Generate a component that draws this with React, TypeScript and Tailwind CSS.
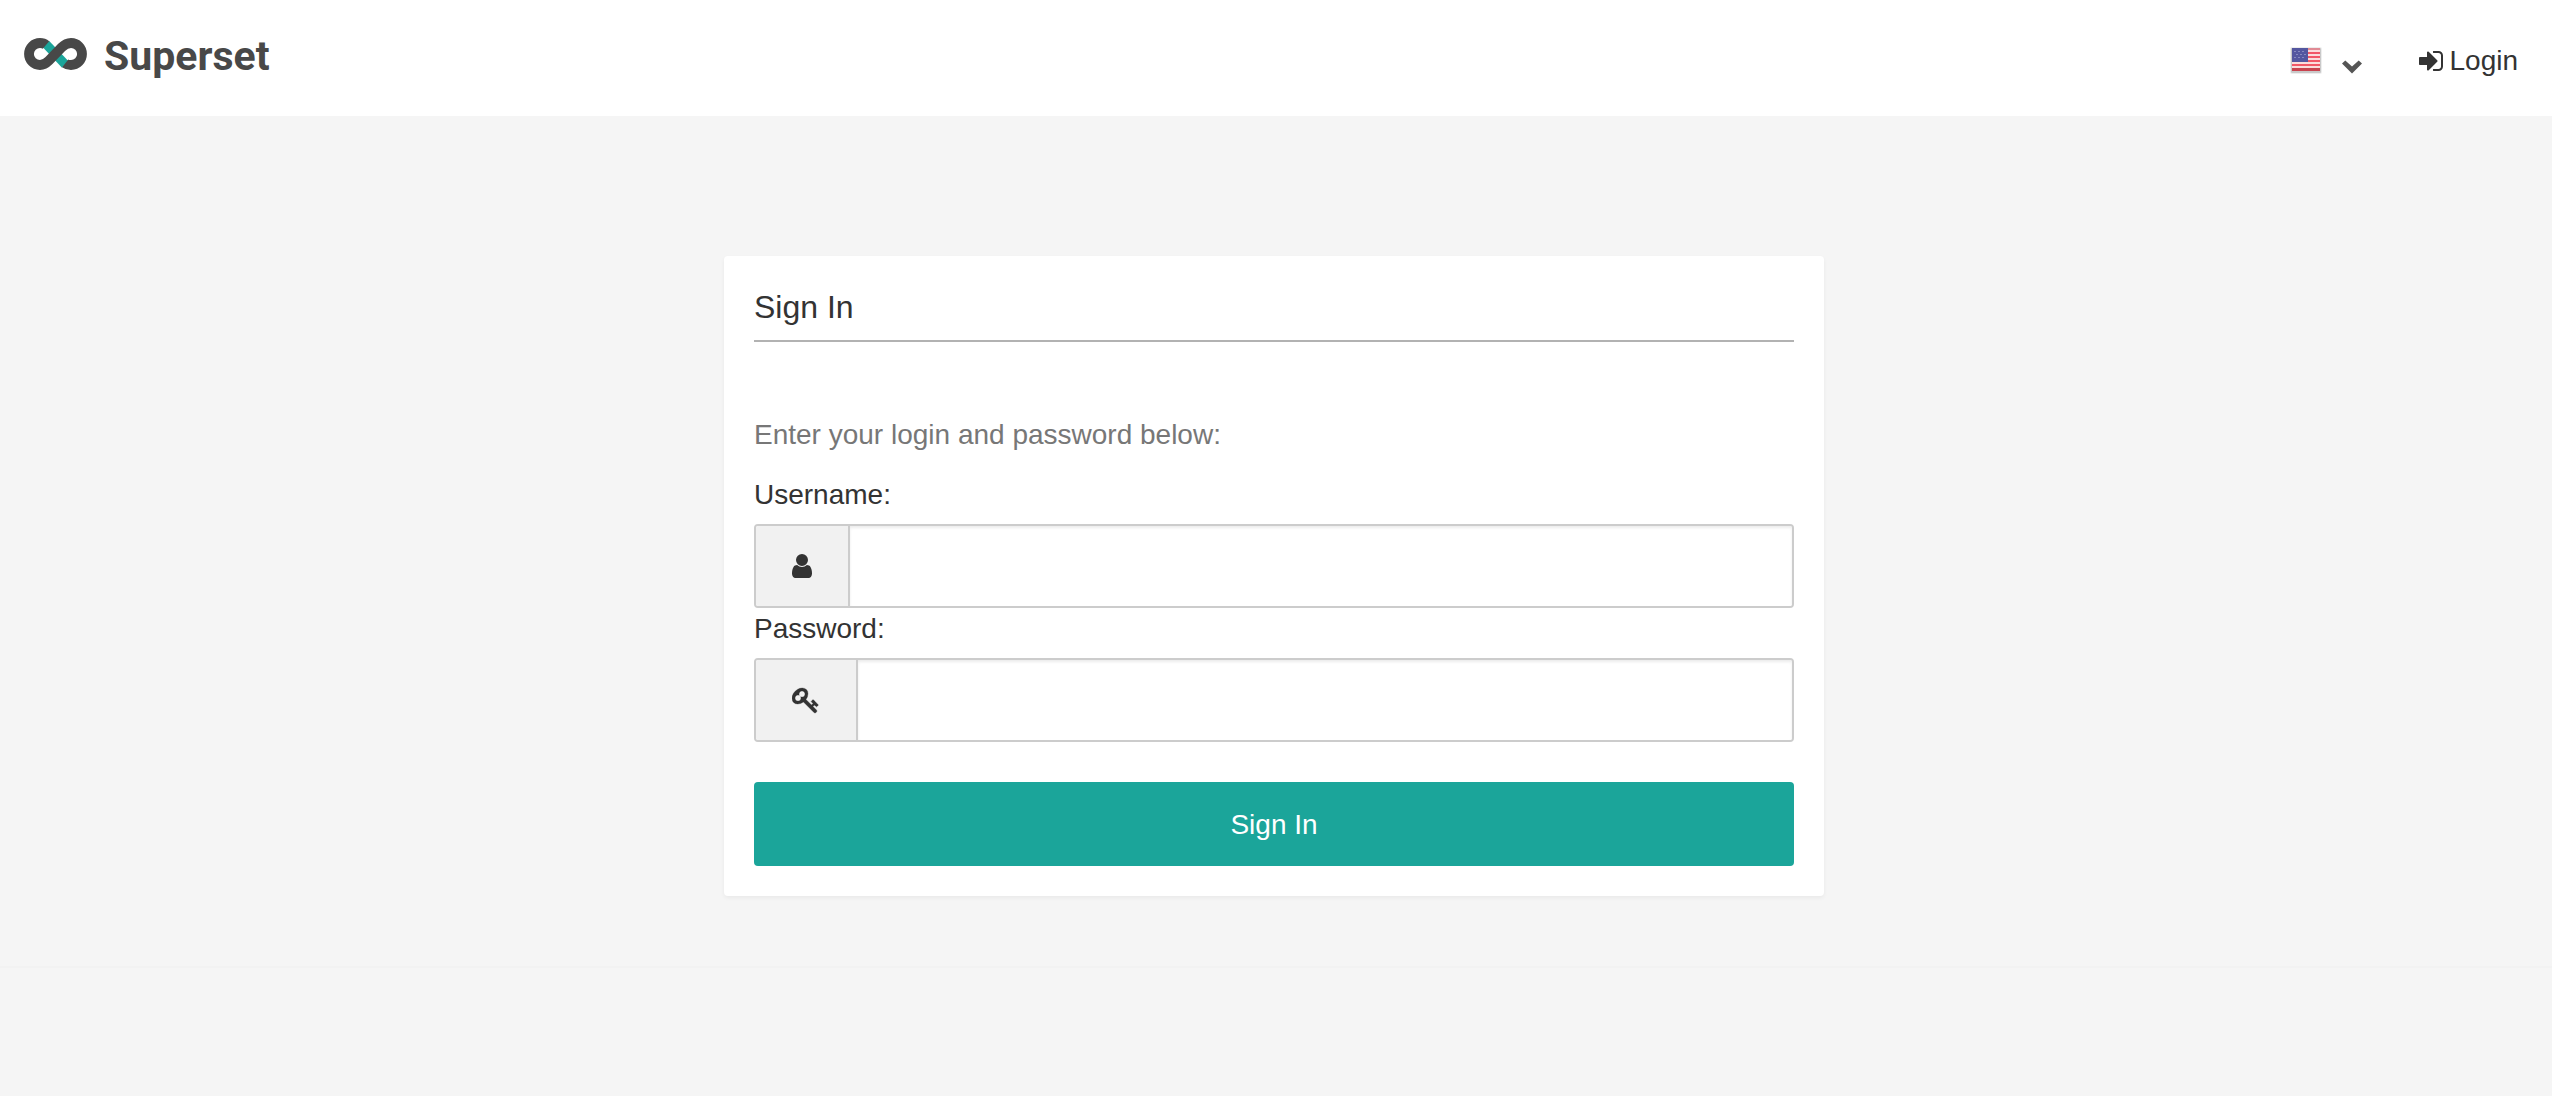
import { useState } from "react";
import type { ReactNode } from "react";

function Logo() {
  return (
    <a href="#" className="flex items-start gap-[17px]" aria-label="Superset home">
      <svg className="mt-2 h-8 w-[63px]" viewBox="0 0 63 32" fill="none" aria-hidden="true">
        <path d="M25 2.800L44.300 23L38 29.800L18.800 9.200Z" fill="#1ba59a" />
        <path
          d="M22 7C20.500 5.700 18.500 5 16 5A11 11 0 0 0 16 27C20 27 22.500 25 25 22.500L37.500 9.500C40 7 43 5 47 5A11 11 0 0 1 47 27C44.500 27 42.700 26.500 41.200 25.300"
          stroke="#484848"
          strokeWidth="9.800"
        />
      </svg>
      <span className="pt-[2px] font-[Roboto,sans-serif] text-[41px] leading-[48px] font-bold text-[#484848]">
        Superset
      </span>
    </a>
  );
}

function Flag() {
  return (
    <svg className="h-7 w-8" viewBox="0 0 32 28" aria-hidden="true">
      <rect x="0" y="0" width="32" height="27" rx="2" fill="#000000" fillOpacity="0.07" />
      <rect x="1" y="1" width="30" height="25" rx="1" fill="#000000" fillOpacity="0.15" />
      <rect x="2" y="1" width="28" height="23" fill="#fbdcdc" />
      <g fill="#f25767">
        <rect x="2" y="1" width="28" height="2" fill="#e08a94" />
        <rect x="2" y="5" width="28" height="2" />
        <rect x="2" y="9" width="28" height="2" />
        <rect x="2" y="13" width="28" height="2" />
        <rect x="2" y="17" width="28" height="2" />
        <rect x="2" y="21" width="28" height="3" fill="#c9434f" />
      </g>
      <rect x="2" y="1" width="16" height="14" fill="#5457a0" />
      <g fill="#8789bf">
        <path d="M4 4h2v1h-2zM8 4h2v1h-2zM12 4h2v1h-2zM6 7h2v1h-2zM10 7h2v1h-2zM14 7h2v1h-2zM4 10h2v1h-2zM8 10h2v1h-2zM12 10h2v1h-2z" />
      </g>
    </svg>
  );
}

function SignInIcon() {
  return (
    <svg className="h-7 w-6" viewBox="128 0 1536 1792" fill="currentColor" aria-hidden="true">
      <path d="M1312 896q0 26-19 45l-544 544q-19 19-45 19t-45-19-19-45v-288h-448q-26 0-45-19t-19-45v-384q0-26 19-45t45-19h448v-288q0-26 19-45t45-19 45 19l544 544q19 19 19 45zm352-352v704q0 119-84.5 203.5t-203.5 84.5h-320q-13 0-22.5-9.5t-9.5-22.5q0-4-1-20t-.5-26.5 3-23.5 10-19.5 20.5-6.5h320q66 0 113-47t47-113v-704q0-66-47-113t-113-47h-312l-11.5-1-11.5-3-8-5.5-7-9-2-13.5q0-4-1-20t-.5-26.5 3-23.5 10-19.5 20.5-6.5h320q119 0 203.5 84.5t84.5 203.5z" />
    </svg>
  );
}

function UserIcon() {
  return (
    <svg className="h-7 w-5" viewBox="256 0 1280 1792" fill="currentColor" aria-hidden="true">
      <path d="M1536 1399q0 109-62.5 187t-150.5 78h-854q-88 0-150.5-78t-62.5-187q0-85 8.5-160.5t31.5-152 58.5-131 94-89 134.5-34.5q131 128 313 128t313-128q76 0 134.5 34.5t94 89 58.5 131 31.5 152 8.5 160.5zm-256-887q0 159-112.5 271.5t-271.5 112.5-271.5-112.5-112.5-271.5 112.5-271.5 271.5-112.5 271.5 112.5 112.5 271.5z" />
    </svg>
  );
}

function KeyIcon() {
  return (
    <svg
      className="h-7 w-7"
      viewBox="0 0 1792 1792"
      fill="currentColor"
      stroke="currentColor"
      strokeWidth="20"
      aria-hidden="true"
    >
      <path
        transform="translate(0 1536) scale(1 -1)"
        d="M832 1024q0 80-56 136t-136 56t-136-56t-56-136q0-42 19-83q-41 19-83 19q-80 0-136-56t-56-136t56-136t136-56t136 56t56 136q0 42-19 83q41-19 83-19q80 0 136 56t56 136zM1683 320q0-17-49-66t-66-49q-9 0-28.5 16t-36.5 33t-38.5 40t-24.5 26l-96-96l220-220q28-28 28-68q0-42-39-81t-81-39q-40 0-68 28l-671 671q-176-131-365-131q-163 0-265.5 102.500t-102.500 265.500q0 160 95 313t248 248t313 95q163 0 265.500-102.500t102.500-265.500q0-189-131-365l355-355l96 96q-3 3-26 24.500t-40 38.500t-33 36.500t-16 28.500q0 17 49 66t66 49q13 0 23-10q6-6 46-44.500t82-79.500t86.500-86t73-78t28.500-41z"
      />
    </svg>
  );
}

function TopBar() {
  return (
    <header className="flex h-[116px] items-start justify-between bg-white pr-[34px] pl-6">
      <div className="pt-[30px]">
        <Logo />
      </div>
      <nav className="flex items-center pt-[45px]">
        <button type="button" aria-label="Language" className="flex items-center gap-5">
          <Flag />
          <svg className="mt-3 h-[14px] w-5" viewBox="0 0 20 14" aria-hidden="true">
            <path d="M0 3.500L3.300 0.500L10 6.500L16.700 0.500L20 3.500L10 13.500Z" fill="#555555" />
          </svg>
        </button>
        <a href="#login" className="ml-[57px] flex items-center gap-[6px] text-[28px] leading-8 text-[#333333]">
          <SignInIcon />
          Login
        </a>
      </nav>
    </header>
  );
}

type FieldProps = {
  id: string;
  label: string;
  type: string;
  value: string;
  onChange: (value: string) => void;
  icon: ReactNode;
};

function Field({ id, label, type, value, onChange, icon }: FieldProps) {
  return (
    <div>
      <label htmlFor={id} className="block h-[50px] pt-px leading-10">
        {label}
      </label>
      <div className="flex h-[84px] overflow-hidden rounded border-2 border-[#cccccc]">
        <span className="flex items-center border-r-2 border-[#cccccc] bg-[#f1f1f1] px-9">{icon}</span>
        <input
          id={id}
          type={type}
          value={value}
          onChange={(e) => onChange(e.target.value)}
          className="min-w-0 flex-1 bg-white px-6 shadow-[inset_0_2px_3px_rgba(0,0,0,0.08)] outline-none"
        />
      </div>
    </div>
  );
}

export default function App() {
  const [username, setUsername] = useState("");
  const [password, setPassword] = useState("");

  return (
    <div className="flex min-h-screen flex-col bg-[#f5f5f5] font-['Liberation_Sans',Arial,sans-serif] text-[28px] text-[#333333]">
      <TopBar />
      <main className="pt-[140px] pr-1 pb-[70px]">
        <section className="mx-auto w-full max-w-[1100px] rounded bg-white p-[30px] shadow-[0_2px_4px_rgba(0,0,0,0.05)]">
          <h1 className="h-14 border-b-2 border-[#b2b2b2] text-[32px] leading-[42px]">Sign In</h1>
          <form onSubmit={(e) => e.preventDefault()}>
            <p className="mt-[73px] mb-[19px] leading-10 text-[#777777]">Enter your login and password below:</p>
            <Field
              id="username"
              label="Username:"
              type="text"
              value={username}
              onChange={setUsername}
              icon={<UserIcon />}
            />
            <Field
              id="password"
              label="Password:"
              type="password"
              value={password}
              onChange={setPassword}
              icon={<KeyIcon />}
            />
            <button type="submit" className="mt-10 block h-[84px] w-full rounded bg-[#1ba59a] pt-[2px] text-white">
              Sign In
            </button>
          </form>
        </section>
      </main>
      <footer className="border-t-2 border-[#f2f2f2]" />
    </div>
  );
}
